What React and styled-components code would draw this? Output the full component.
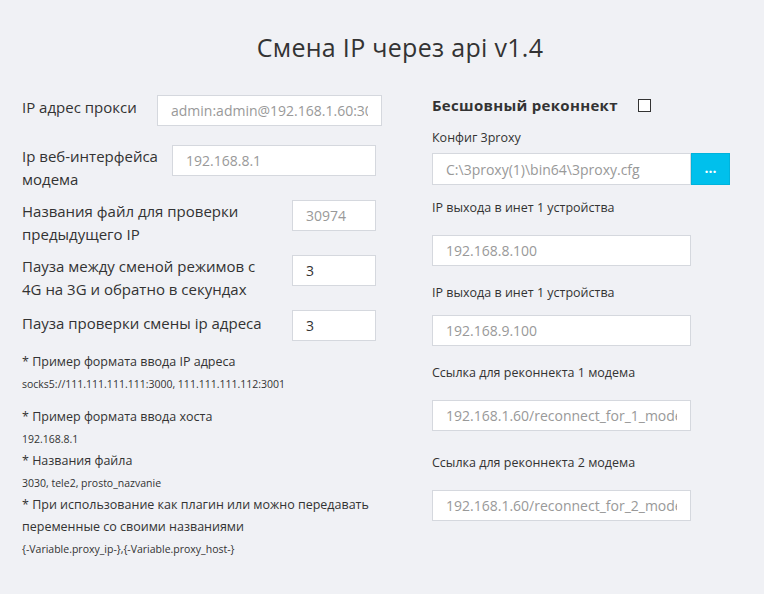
import React from 'react';
import styled, { createGlobalStyle } from 'styled-components';

const GlobalStyle = createGlobalStyle`
  html, body {
    margin: 0;
    padding: 0;
    background: #f0f1f5;
    overflow: hidden;
  }
  body {
    font-family: "Open Sans", "DejaVu Sans", sans-serif;
    color: #333;
  }
`

const Page = styled.div`
  width: 800px;
  padding-top: 30px;
`

const Title = styled.h1`
  margin: 0;
  text-align: center;
  font-size: 25px;
  font-weight: 400;
  color: #333;
  letter-spacing: 0.3px;
  line-height: 34px;
`

const Columns = styled.div`
  display: grid;
  grid-template-columns: 410px 1fr;
  padding-left: 22px;
  margin-top: 31px;
`

const LeftCol = styled.div`
  display: flex;
  flex-direction: column;
  width: 360px;
`

const Row = styled.div`
  display: flex;
  align-items: flex-start;
  justify-content: space-between;
  height: ${props => props.$h}px;
`

const Label = styled.div`
  font-size: 15px;
  line-height: 23px;
  color: #333;
  padding-top: ${props => props.$pt || 0}px;
  max-width: 250px;
`

const Input = styled.input`
  box-sizing: border-box;
  width: ${props => props.$w ? props.$w + 'px' : '100%'};
  height: 31px;
  margin-right: ${props => props.$mr || 0}px;
  padding: 0 13px;
  border: 1px solid #d5d8de;
  background: #fff;
  font-family: inherit;
  font-size: 14px;
  color: ${props => props.$dark ? '#333' : '#999'};
  outline: none;
  flex-shrink: 0;
`

const Notes = styled.div`
  margin-top: 10px;
  line-height: 22px;
  white-space: nowrap;
`

const NoteHead = styled.div`
  font-size: 12.5px;
  color: #333;
  margin-top: ${props => props.$mt || 0}px;
`

const NoteExample = styled.div`
  font-size: 10.5px;
  color: #333;
`

const RightCol = styled.div`
  display: flex;
  flex-direction: column;
  width: 297px;
  margin-top: -1px;
`

const Seamless = styled.label`
  display: flex;
  align-items: center;
  gap: 20px;
  font-size: 15px;
  font-weight: 700;
  color: #333;
  line-height: 22px;
  letter-spacing: 0.3px;
`

const Checkbox = styled.span`
  display: inline-block;
  width: 11px;
  height: 11px;
  border: 1px solid #333;
  background: #fff;
`

const FieldLabel = styled.div`
  font-size: 12.5px;
  line-height: 20px;
  color: #333;
  margin-top: ${props => props.$mt}px;
  margin-bottom: ${props => props.$mb}px;
`

const FileRow = styled.div`
  display: flex;
  width: 297px;
`

const BrowseButton = styled.button`
  width: 39px;
  height: 32px;
  border: 1px solid #00b3dc;
  background: #00c0ec;
  color: #fff;
  font-size: 14px;
  font-weight: 700;
  padding: 0 0 4px;
  font-family: inherit;
  flex-shrink: 0;
`

const RightInput = styled(Input)`
  width: 259px;
  height: ${props => props.$h || 31}px;
`

const App = () => {
  return (
    <Page>
      <GlobalStyle />
      <Title>Смена IP через api v1.4</Title>
      <Columns>
        <LeftCol>
          <Row $h={50}>
            <Label $pt={1}>IP адрес прокси</Label>
            <Input $w={225} defaultValue="admin:admin@192.168.1.60:3090" />
          </Row>
          <Row $h={55}>
            <Label>Ip веб-интерфейса<br />модема</Label>
            <Input $w={204} $mr={6} defaultValue="192.168.8.1" />
          </Row>
          <Row $h={55}>
            <Label>Названия файл для проверки<br />предыдущего IP</Label>
            <Input $w={84} $mr={6} defaultValue="30974" />
          </Row>
          <Row $h={55}>
            <Label>Пауза между сменой режимов с<br />4G на 3G и обратно в секундах</Label>
            <Input $w={84} $mr={6} $dark defaultValue="3" />
          </Row>
          <Row $h={31}>
            <Label $pt={2}>Пауза проверки смены ip адреса</Label>
            <Input $w={84} $mr={6} $dark defaultValue="3" />
          </Row>
          <Notes>
            <NoteHead>* Пример формата ввода IP адреса</NoteHead>
            <NoteExample>socks5://111.111.111.111:3000, 111.111.111.112:3001</NoteExample>
            <NoteHead $mt={11}>* Пример формата ввода хоста</NoteHead>
            <NoteExample>192.168.8.1</NoteExample>
            <NoteHead>* Названия файла</NoteHead>
            <NoteExample>3030, tele2, prosto_nazvanie</NoteExample>
            <NoteHead>* При использование как плагин или можно передавать<br />переменные со своими названиями</NoteHead>
            <NoteExample>{'{-Variable.proxy_ip-},{-Variable.proxy_host-}'}</NoteExample>
          </Notes>
        </LeftCol>
        <RightCol>
          <Seamless>
            Бесшовный реконнект
            <Checkbox />
          </Seamless>
          <FieldLabel $mt={12} $mb={5}>Конфиг 3proxy</FieldLabel>
          <FileRow>
            <RightInput $h={32} defaultValue="C:\3proxy(1)\bin64\3proxy.cfg" />
            <BrowseButton>...</BrowseButton>
          </FileRow>
          <FieldLabel $mt={13} $mb={17}>IP выхода в инет 1 устройства</FieldLabel>
          <RightInput defaultValue="192.168.8.100" />
          <FieldLabel $mt={17} $mb={12}>IP выхода в инет 1 устройства</FieldLabel>
          <RightInput defaultValue="192.168.9.100" />
          <FieldLabel $mt={17} $mb={17}>Ссылка для реконнекта 1 модема</FieldLabel>
          <RightInput defaultValue="192.168.1.60/reconnect_for_1_modem" />
          <FieldLabel $mt={22} $mb={17}>Ссылка для реконнекта 2 модема</FieldLabel>
          <RightInput defaultValue="192.168.1.60/reconnect_for_2_modem" />
        </RightCol>
      </Columns>
    </Page>
  );
};

export default App;
